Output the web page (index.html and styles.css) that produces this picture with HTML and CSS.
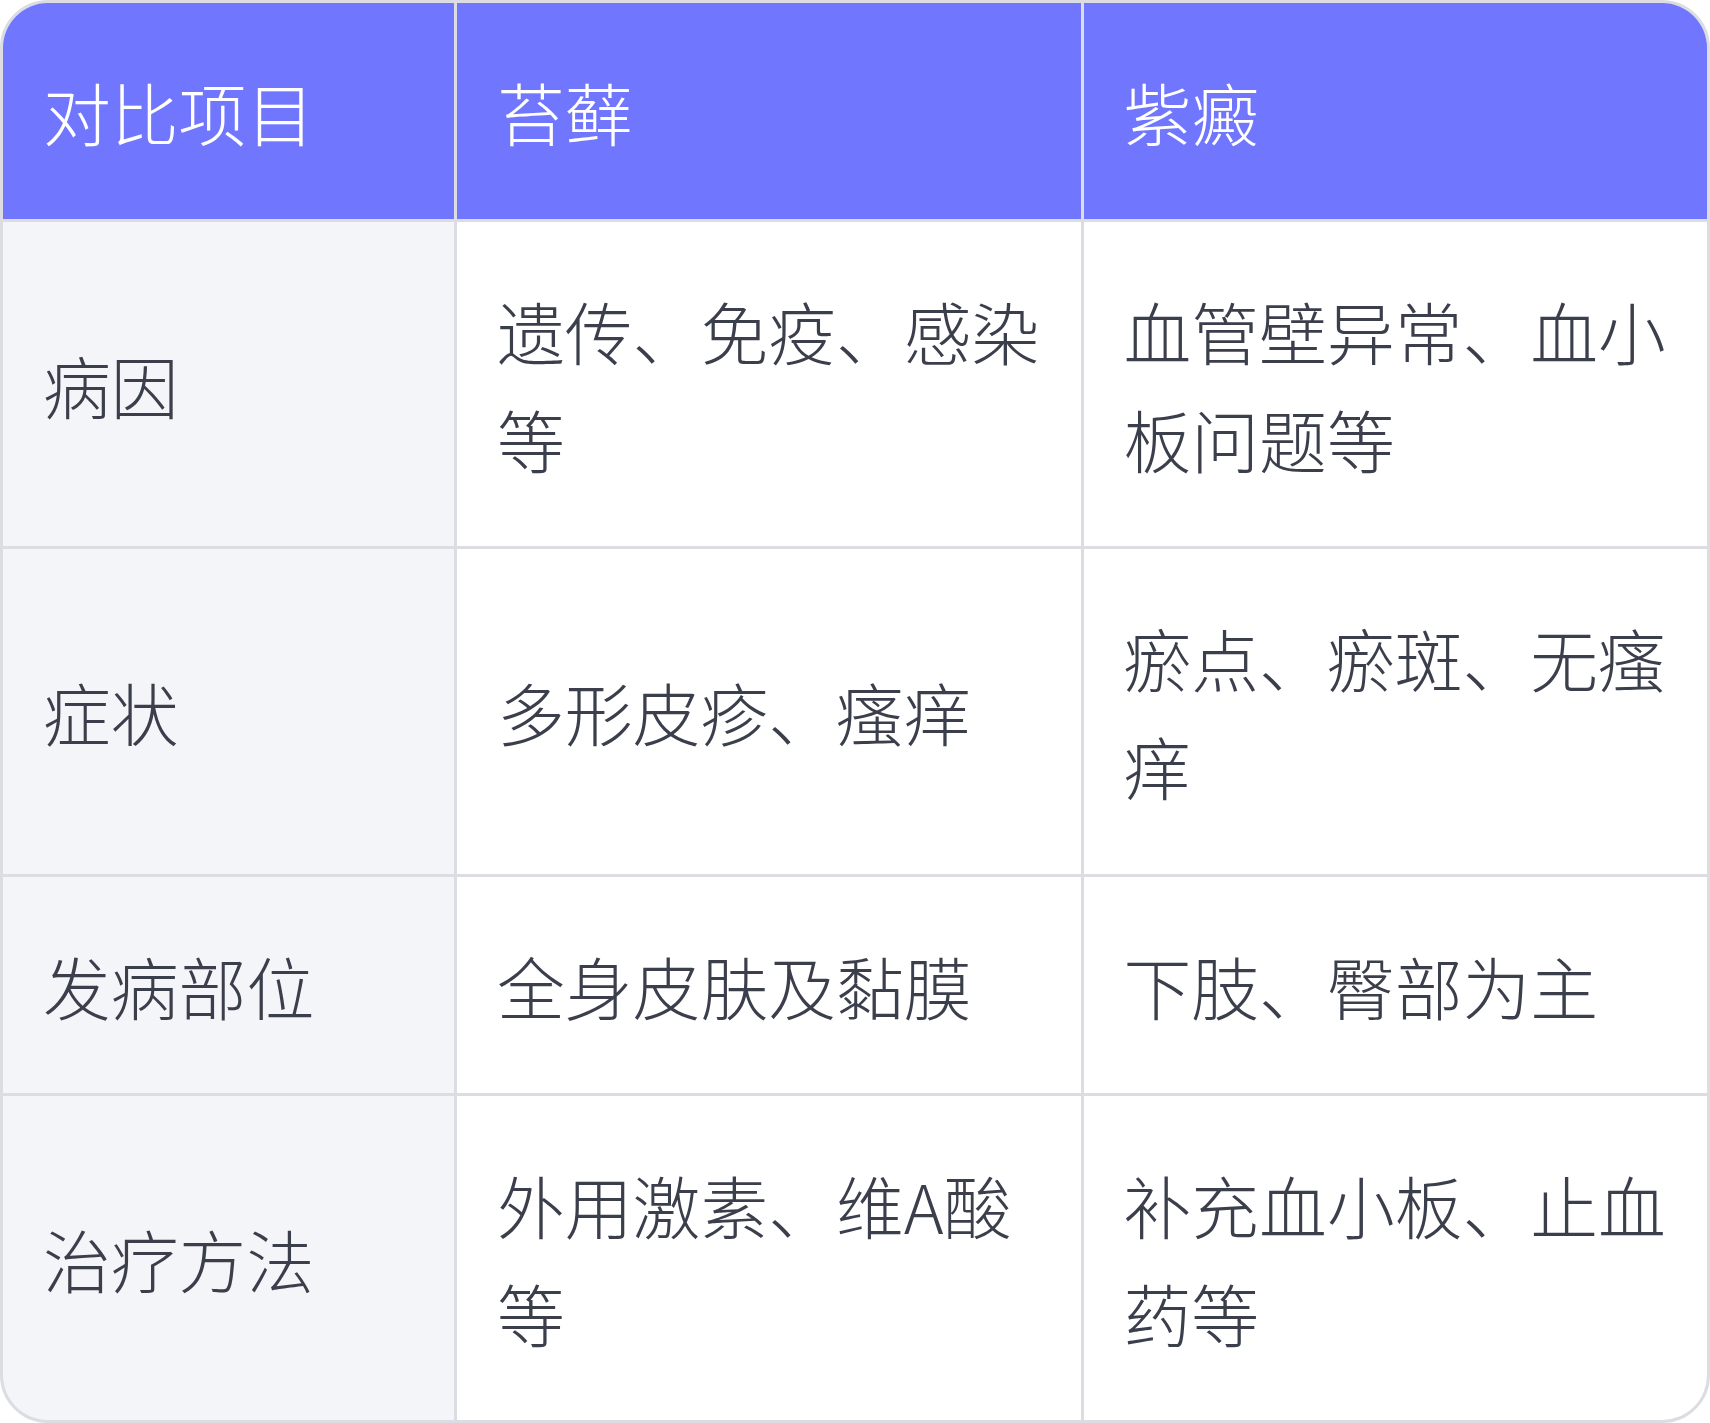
FILE: index.html
```html
<!DOCTYPE html>
<html lang="zh-CN">
<head>
<meta charset="utf-8">
<link rel="stylesheet" href="styles.css">
</head>
<body>
<div class="table">
  <div class="cell head">对比项目</div>
  <div class="cell head">苔藓</div>
  <div class="cell head">紫癜</div>

  <div class="cell label">病因</div>
  <div class="cell">遗传、免疫、感染等</div>
  <div class="cell">血管壁异常、血小板问题等</div>

  <div class="cell label">症状</div>
  <div class="cell">多形皮疹、瘙痒</div>
  <div class="cell">瘀点、瘀斑、无瘙痒</div>

  <div class="cell label">发病部位</div>
  <div class="cell">全身皮肤及黏膜</div>
  <div class="cell">下肢、臀部为主</div>

  <div class="cell label">治疗方法</div>
  <div class="cell">外用激素、维A酸等</div>
  <div class="cell">补充血小板、止血药等</div>
</div>
</body>
</html>
```
FILE: styles.css
```css
html, body {
  margin: 0;
  padding: 0;
  background: #ffffff;
}
.table {
  width: 1710px;
  height: 1423px;
  box-sizing: border-box;
  border: 3px solid #dcdde2;
  border-radius: 48px;
  overflow: hidden;
  display: grid;
  grid-template-columns: 451px 1fr 1fr;
  grid-template-rows: 216px 1fr 1fr 216px 1fr;
  gap: 3px;
  background: #dcdde2;
  font-family: "Noto Sans CJK SC", "Noto Sans", sans-serif;
  font-weight: 300;
  font-size: 67.8px;
  line-height: 108px;
  color: #3b3f4c;
}
.cell {
  background: #ffffff;
  padding: 2px 40px 0;
  display: flex;
  align-items: center;
}
.cell.head {
  background: #7176ff;
  color: #ffffff;
}
.cell.label {
  background: #f4f5f9;
}
```
